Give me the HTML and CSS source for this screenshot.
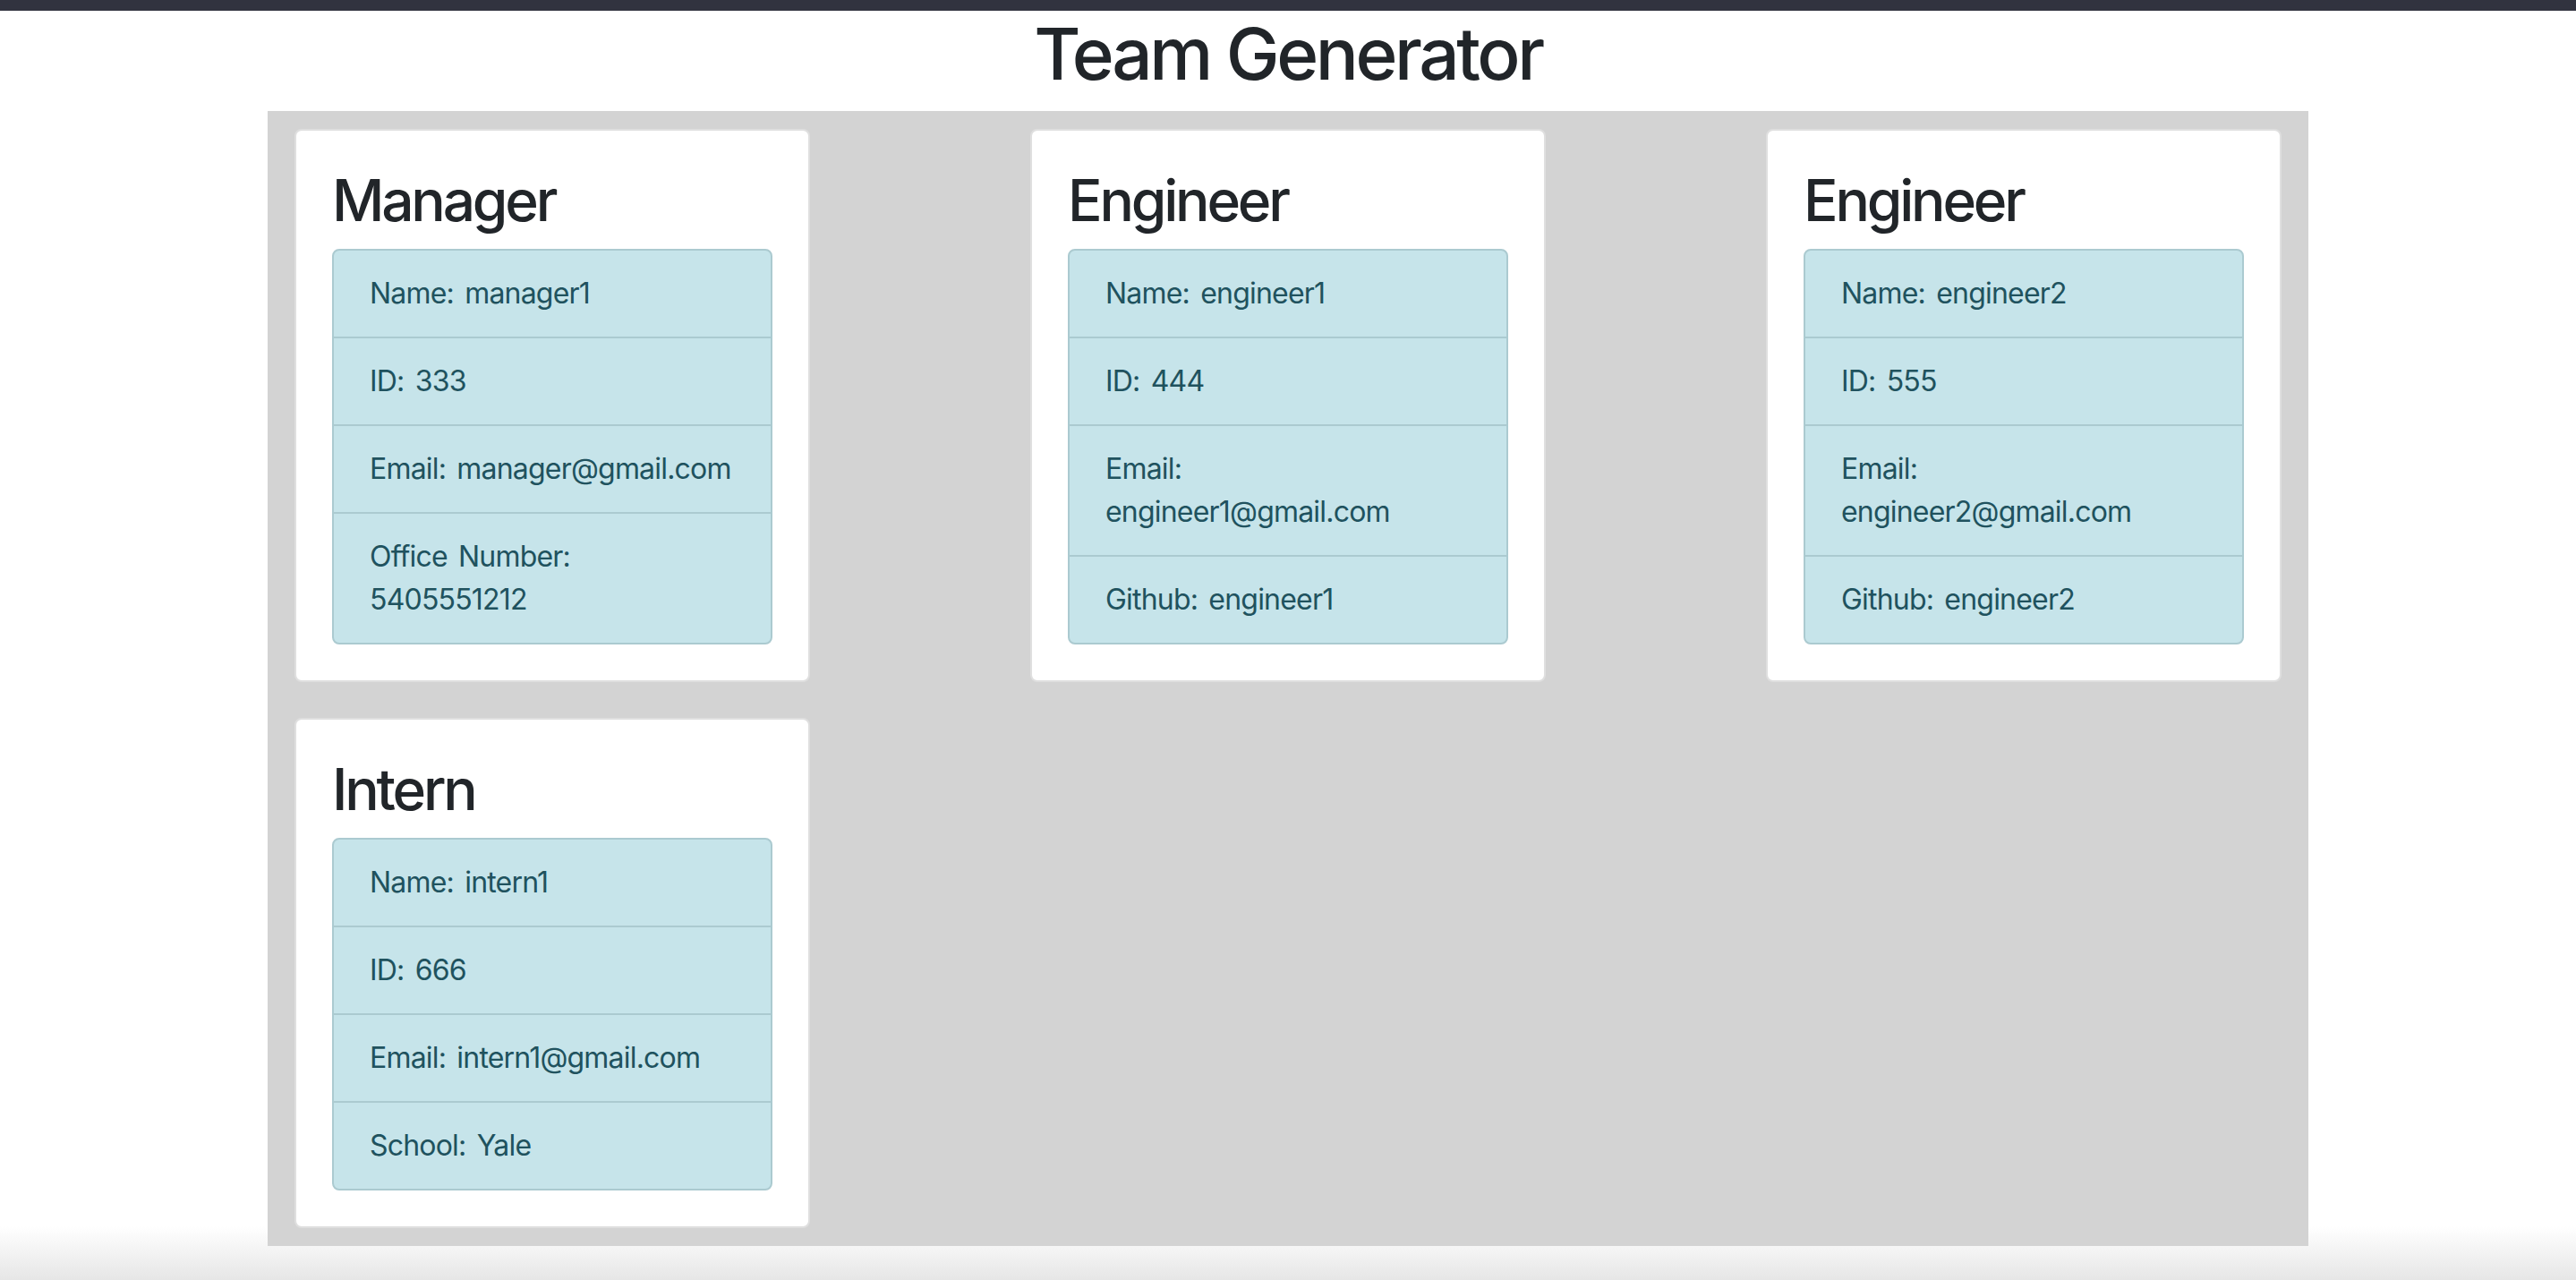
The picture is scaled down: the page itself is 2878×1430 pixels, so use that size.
FILE: index.html
```html
<!DOCTYPE html>
<html lang="en">
<head>
<meta charset="utf-8">
<title>Team Generator</title>
<link rel="stylesheet" href="styles.css">
</head>
<body>
<div class="topbar"></div>
<h1 class="page-title">Team Generator</h1>
<main class="team">
  <section class="card">
    <h2 class="card-title">Manager</h2>
    <ul class="info-list">
      <li class="info-item">Name: manager1</li>
      <li class="info-item">ID: 333</li>
      <li class="info-item">Email: manager@gmail.com</li>
      <li class="info-item">Office Number: 5405551212</li>
    </ul>
  </section>
  <section class="card">
    <h2 class="card-title">Engineer</h2>
    <ul class="info-list">
      <li class="info-item">Name: engineer1</li>
      <li class="info-item">ID: 444</li>
      <li class="info-item">Email: engineer1@gmail.com</li>
      <li class="info-item">Github: engineer1</li>
    </ul>
  </section>
  <section class="card">
    <h2 class="card-title">Engineer</h2>
    <ul class="info-list">
      <li class="info-item">Name: engineer2</li>
      <li class="info-item">ID: 555</li>
      <li class="info-item">Email: engineer2@gmail.com</li>
      <li class="info-item">Github: engineer2</li>
    </ul>
  </section>
  <section class="card">
    <h2 class="card-title">Intern</h2>
    <ul class="info-list">
      <li class="info-item">Name: intern1</li>
      <li class="info-item">ID: 666</li>
      <li class="info-item">Email: intern1@gmail.com</li>
      <li class="info-item">School: Yale</li>
    </ul>
  </section>
</main>
</body>
</html>
```

FILE: styles.css
```css
html {
  min-height: 100%;
  background: linear-gradient(to bottom, #ffffff calc(100% - 60px), #e6e6e6 100%);
}
body {
  margin: 0;
  min-height: 100vh;
  font-family: Inter, "Noto Sans", "Liberation Sans", sans-serif;
  color: #212529;
}
.topbar {
  height: 12px;
  background: #31333f;
}
.page-title {
  margin: 0 0 16px 0;
  font-size: 80px;
  font-weight: 500;
  line-height: 96px;
  text-align: center;
  color: #212529;
  letter-spacing: -3.4px;
}
.team {
  width: 2220px;
  margin: 0 auto;
  padding: 0 30px;
  background: #d3d3d3;
  display: flex;
  flex-wrap: wrap;
  justify-content: space-between;
  align-items: flex-start;
}
.card {
  box-sizing: border-box;
  width: 576px;
  margin: 20px 0;
  padding: 40px;
  background: #ffffff;
  border: 2px solid #dfdfdf;
  border-radius: 8px;
}
.card-title {
  margin: 0 0 16px 0;
  font-size: 64px;
  font-weight: 500;
  line-height: 76px;
  color: #212529;
  letter-spacing: -3.2px;
}
.info-list {
  list-style: none;
  margin: 0;
  padding: 0;
  border: 2px solid #abcad0;
  border-radius: 8px;
  background: #c6e4ea;
  overflow: hidden;
}
.info-item {
  padding: 24px 40px;
  font-size: 32px;
  line-height: 48px;
  color: #20525e;
  letter-spacing: -0.8px;
  word-spacing: 4px;
}
.info-item + .info-item {
  border-top: 2px solid #abcad0;
}
```
